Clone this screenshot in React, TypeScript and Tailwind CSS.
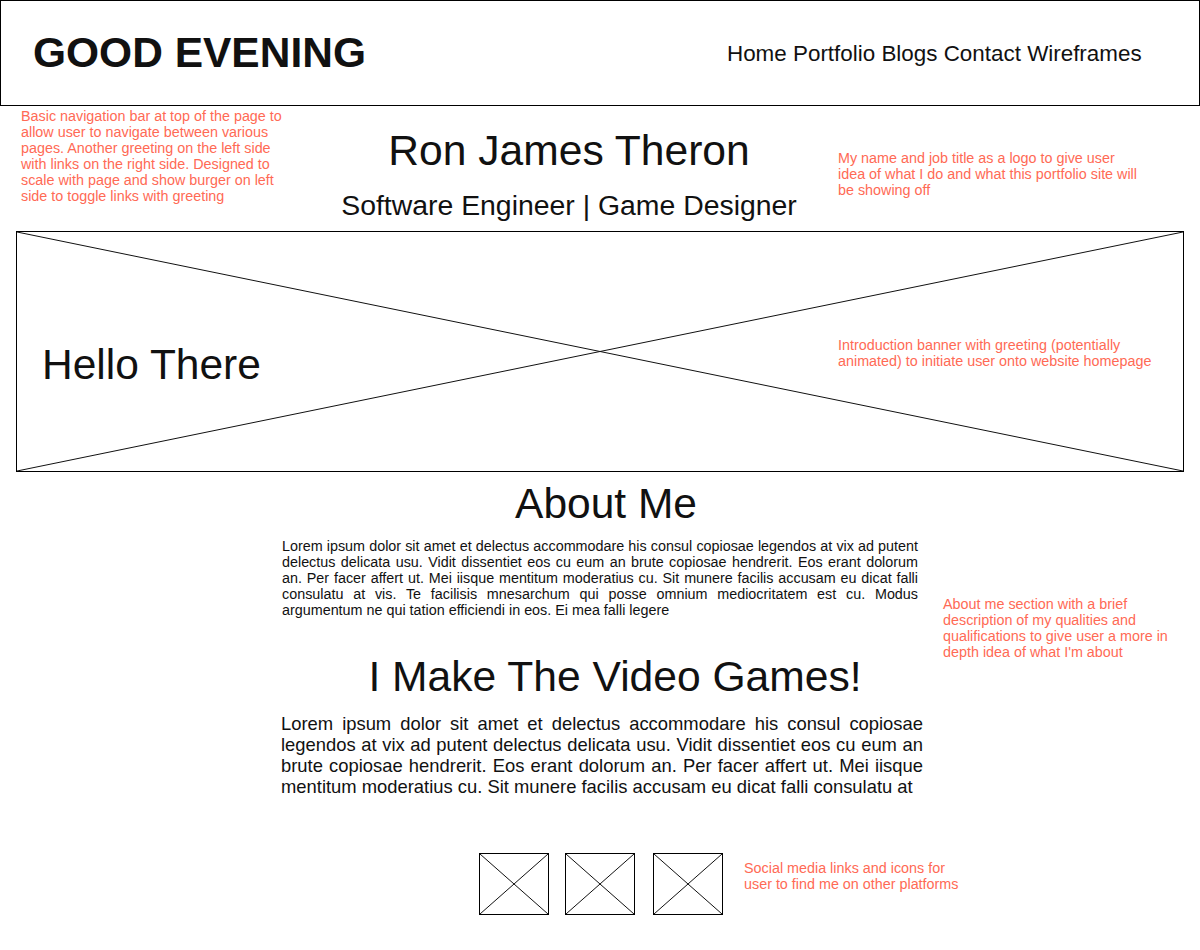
import React from 'react';

const NAV_LINKS = ['Home', 'Portfolio', 'Blogs', 'Contact', 'Wireframes'];

const ABOUT_TEXT =
  'Lorem ipsum dolor sit amet et delectus accommodare his consul copiosae legendos at vix ad putent delectus delicata usu. Vidit dissentiet eos cu eum an brute copiosae hendrerit. Eos erant dolorum an. Per facer affert ut. Mei iisque mentitum moderatius cu. Sit munere facilis accusam eu dicat falli consulatu at vis. Te facilisis mnesarchum qui posse omnium mediocritatem est cu. Modus argumentum ne qui tation efficiendi in eos. Ei mea falli legere';

const GAMES_TEXT =
  'Lorem ipsum dolor sit amet et delectus accommodare his consul copiosae legendos at vix ad putent delectus delicata usu. Vidit dissentiet eos cu eum an brute copiosae hendrerit. Eos erant dolorum an. Per facer affert ut. Mei iisque mentitum moderatius cu. Sit munere facilis accusam eu dicat falli consulatu at';

// Red annotation text, lines kept as in the wireframe
function Note({ lines, className = '' }: { lines: string[]; className?: string }) {
  return (
    <div className={`text-[14.35px] leading-[16px] text-[#ff6a55] whitespace-nowrap ${className}`}>
      {lines.map((line, i) => (
        <div key={i}>{line}</div>
      ))}
    </div>
  );
}

// Crossed-out placeholder lines (image placeholder)
function Cross() {
  return (
    <svg className="absolute inset-0 w-full h-full" preserveAspectRatio="none" viewBox="0 0 100 100">
      <line x1="0" y1="0" x2="100" y2="100" stroke="#111" strokeWidth="1" vectorEffect="non-scaling-stroke" />
      <line x1="100" y1="0" x2="0" y2="100" stroke="#111" strokeWidth="1" vectorEffect="non-scaling-stroke" />
    </svg>
  );
}

function Header() {
  return (
    <div className="h-[106px] border border-black flex items-start">
      <div className="w-[726px] pl-[32px] pt-[31px]">
        <h1 className="text-[42.5px] leading-[42px] font-bold text-[#111]">GOOD EVENING</h1>
      </div>
      <nav className="pt-[42px] text-[22.4px] leading-[22.3px] text-[#111] flex gap-[0.28em]">
        {NAV_LINKS.map((link) => (
          <span key={link}>{link}</span>
        ))}
      </nav>
    </div>
  );
}

export default function App() {
  return (
    <div className="w-[1200px] min-h-[950px] bg-white font-['Liberation_Sans',Arial,sans-serif]">
      <Header />

      {/* Name / title row */}
      <div className="h-[125px] grid grid-cols-[300px_538px_1fr]">
        <Note
          className="pl-[21px] pt-[2px]"
          lines={[
            'Basic navigation bar at top of the page to',
            'allow user to navigate between various',
            'pages. Another greeting on the left side',
            'with links on the right side. Designed to',
            'scale with page and show burger on left',
            'side to toggle links with greeting',
          ]}
        />
        <div className="flex flex-col items-center pt-[23px] text-[#111]">
          <h2 className="text-[42.6px] leading-[42px] whitespace-nowrap">Ron James Theron</h2>
          <p className="mt-[19.5px] text-[28.4px] leading-[28px] whitespace-nowrap">Software Engineer | Game Designer</p>
        </div>
        <Note
          className="pt-[44px]"
          lines={[
            'My name and job title as a logo to give user',
            'idea of what I do and what this portfolio site will',
            'be showing off',
          ]}
        />
      </div>

      {/* Intro banner */}
      <div className="relative ml-[16px] w-[1168px] h-[241px] border border-black flex">
        <Cross />
        <div className="relative w-[821px] pl-[25px] pt-[112px]">
          <h2 className="text-[42.5px] leading-[42px] text-[#111]">Hello There</h2>
        </div>
        <Note
          className="relative pt-[105px]"
          lines={['Introduction banner with greeting (potentially', 'animated) to initiate user onto website homepage']}
        />
      </div>

      {/* About me */}
      <div className="h-[183px] flex">
        <div className="ml-[282px] w-[648px] pt-[11px]">
          <h2 className="text-center text-[42.5px] leading-[42px] text-[#111]">About Me</h2>
          <p className="mt-[13px] w-[636px] text-justify text-[14.35px] leading-[16px] text-[#111]">{ABOUT_TEXT}</p>
        </div>
        <Note
          className="ml-[13px] pt-[124px]"
          lines={[
            'About me section with a brief',
            'description of my qualities and',
            'qualifications to give user a more in',
            "depth idea of what I'm about",
          ]}
        />
      </div>

      {/* Games */}
      <div className="ml-[281px] w-[668px]">
        <h2 className="text-center text-[42.6px] leading-[42px] text-[#111]">I Make The Video Games!</h2>
        <p className="mt-[16px] w-[642px] text-justify text-[18.4px] leading-[21px] text-[#111]">{GAMES_TEXT}</p>
      </div>

      {/* Social links */}
      <div className="mt-[56px] ml-[479px] flex items-start">
        <div className="relative w-[70px] h-[62px] border border-black">
          <Cross />
        </div>
        <div className="relative ml-[16px] w-[70px] h-[62px] border border-black">
          <Cross />
        </div>
        <div className="relative ml-[18px] w-[70px] h-[62px] border border-black">
          <Cross />
        </div>
        <Note
          className="ml-[21px] mt-[7px]"
          lines={['Social media links and icons for', 'user to find me on other platforms']}
        />
      </div>
    </div>
  );
}
